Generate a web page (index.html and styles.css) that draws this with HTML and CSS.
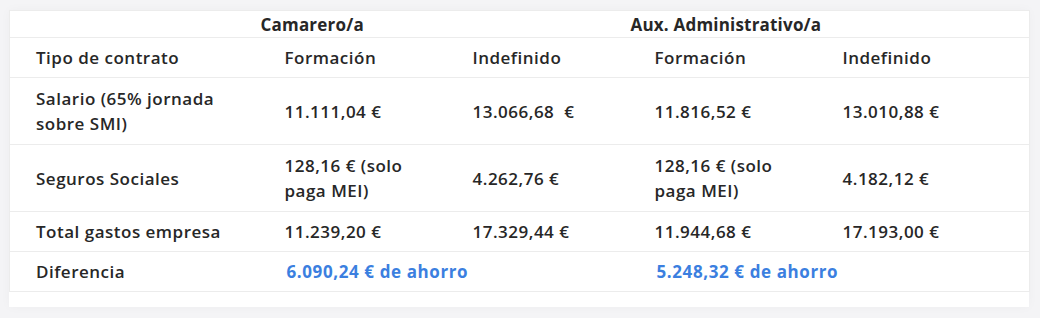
FILE: index.html
```html
<!DOCTYPE html>
<html lang="es">
<head>
<meta charset="utf-8">
<title>Comparativa</title>
<link rel="stylesheet" href="styles.css">
</head>
<body>
<div class="card">
  <table class="cmp">
    <colgroup>
      <col class="c1"><col class="c2"><col class="c3"><col class="c4"><col class="c5">
    </colgroup>
    <thead>
      <tr class="top">
        <th></th>
        <th colspan="2">Camarero/a</th>
        <th colspan="2">Aux. Administrativo/a</th>
      </tr>
    </thead>
    <tbody>
      <tr>
        <td>Tipo de contrato</td>
        <td>Formación</td>
        <td>Indefinido</td>
        <td>Formación</td>
        <td>Indefinido</td>
      </tr>
      <tr class="tall">
        <td>Salario (65% jornada sobre SMI)</td>
        <td>11.111,04 €</td>
        <td>13.066,68&nbsp; €</td>
        <td>11.816,52 €</td>
        <td>13.010,88 €</td>
      </tr>
      <tr class="tall">
        <td>Seguros Sociales</td>
        <td>128,16 € (solo paga MEI)</td>
        <td>4.262,76 €</td>
        <td>128,16 € (solo paga MEI)</td>
        <td>4.182,12 €</td>
      </tr>
      <tr>
        <td>Total gastos empresa</td>
        <td>11.239,20 €</td>
        <td>17.329,44 €</td>
        <td>11.944,68 €</td>
        <td>17.193,00 €</td>
      </tr>
      <tr>
        <td>Diferencia</td>
        <td colspan="2" class="save">6.090,24 € de ahorro</td>
        <td colspan="2" class="save">5.248,32 € de ahorro</td>
      </tr>
    </tbody>
  </table>
</div>
</body>
</html>
```

FILE: styles.css
```css
html, body {
  margin: 0;
  padding: 0;
}
body {
  background: #f4f4f6;
  font-family: "Open Sans", "Noto Sans", sans-serif;
  color: #272727;
  padding: 10px 11px 12px 9px;
}
.card {
  background: #fff;
  box-shadow: 0 0 10px rgba(0, 0, 0, 0.03);
  padding-bottom: 15px;
}
.cmp {
  width: 1020px;
  table-layout: fixed;
  border-collapse: collapse;
  border: 1px solid #ececec;
  border-bottom: none;
  font-size: 17px;
  font-weight: 600;
  letter-spacing: 0.5px;
}
.c1 { width: 249px; }
.c2 { width: 188px; }
.c3 { width: 182px; }
.c4 { width: 188px; }
.c5 { width: 213px; }
.cmp th {
  text-align: left;
  font-weight: 700;
  letter-spacing: 0.2px;
  padding: 1px 2px 0;
  line-height: 25px;
  border-bottom: 1px solid #ececec;
}
.cmp td {
  padding: 7px 20px 7px 26px;
  line-height: 25px;
  vertical-align: middle;
  border-bottom: 1px solid #ececec;
}
.cmp tr.tall td {
  padding-top: 8px;
  padding-bottom: 8px;
}
.cmp td.save {
  color: #3b7fe0;
  font-weight: 700;
  letter-spacing: 0.6px;
  padding-left: 28px;
}
```
